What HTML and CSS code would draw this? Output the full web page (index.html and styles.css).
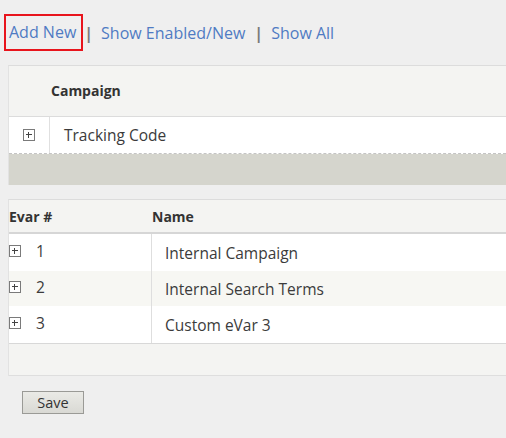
FILE: index.html
```html
<!DOCTYPE html>
<html>
<head>
<meta charset="utf-8">
<link rel="stylesheet" href="styles.css">
</head>
<body>
<div class="toolbar">
  <a class="link addnew" href="#">Add New</a>
  <span class="sep first">|</span>
  <a class="link" href="#">Show Enabled/New</a>
  <span class="sep">|</span>
  <a class="link" href="#">Show All</a>
</div>

<div class="panel panel-one">
  <div class="p1-head">Campaign</div>
  <div class="p1-row">
    <div class="p1-icon"><span class="plus"></span></div>
    <div class="p1-name">Tracking Code</div>
  </div>
  <div class="band"></div>
</div>

<div class="panel panel-two">
  <div class="p2-head">
    <div class="col-num">Evar #</div>
    <div class="col-name">Name</div>
  </div>
  <div class="p2-row">
    <div class="col-num"><span class="plus"></span><span class="num">1</span></div>
    <div class="col-name">Internal Campaign</div>
  </div>
  <div class="p2-row alt">
    <div class="col-num"><span class="plus"></span><span class="num">2</span></div>
    <div class="col-name">Internal Search Terms</div>
  </div>
  <div class="p2-row last">
    <div class="col-num"><span class="plus"></span><span class="num">3</span></div>
    <div class="col-name">Custom eVar 3</div>
  </div>
  <div class="p2-foot"></div>
</div>

<div class="actions">
  <button class="save" type="button">Save</button>
</div>
</body>
</html>
```

FILE: styles.css
```css
html, body {
  margin: 0;
  padding: 0;
  background: #efefef;
  font-family: "Open Sans", "Liberation Sans", sans-serif;
  color: #3b3b3b;
  overflow: hidden;
}

.toolbar {
  display: flex;
  align-items: center;
  padding: 14px 0 0 4px;
  height: 37px;
}

.link {
  color: #4f7bc3;
  text-decoration: none;
  font-size: 16px;
}

.addnew {
  border: 2px solid #e8141c;
  height: 33px;
  line-height: 33px;
  padding: 0 5px 0 3px;
}

.sep {
  color: #7a7a7a;
  font-size: 16px;
  font-weight: 700;
  margin: 0 8px 0 9px;
}

.sep.first {
  margin-left: 1px;
}

.panel {
  margin-left: 8px;
  border-left: 1px solid #e2e2e2;
}

.panel-one {
  margin-top: 14px;
  border-top: 1px solid #dcdcdc;
}

.p1-head {
  height: 50px;
  line-height: 50px;
  background: #f4f4f2;
  border-bottom: 1px solid #dcdcdc;
  padding-left: 42px;
  font-size: 14px;
  font-weight: 700;
  color: #333;
}

.p1-row {
  display: flex;
  height: 36px;
  background: #fff;
  border-bottom: 1px dashed #c4c4c4;
}

.p1-icon {
  width: 41px;
  border-right: 1px solid #e0e0e0;
  display: flex;
  align-items: center;
  padding-left: 14px;
  box-sizing: border-box;
}

.p1-name {
  display: flex;
  align-items: center;
  padding-left: 14px;
  font-size: 15.5px;
}

.band {
  height: 31px;
  background: #d5d5cd;
}

.plus {
  display: inline-block;
  position: relative;
  width: 12px;
  height: 12px;
  border: 1px solid #7a7a7a;
  box-sizing: border-box;
  background: #fff;
  flex: none;
}

.plus::before,
.plus::after {
  content: "";
  position: absolute;
  background: #444;
}

.plus::before {
  left: 2px;
  top: 4px;
  width: 6px;
  height: 1px;
}

.plus::after {
  left: 4px;
  top: 2px;
  width: 1px;
  height: 6px;
}

.panel-two {
  margin-top: 14px;
  border-top: 1px solid #dcdcdc;
}

.p2-head {
  display: flex;
  height: 32px;
  background: #f4f4f2;
  border-bottom: 2px solid #d6d6d6;
  font-size: 14px;
  font-weight: 700;
  color: #333;
}

.p2-head .col-num,
.p2-head .col-name {
  display: flex;
  align-items: center;
}

.col-num {
  width: 143px;
  flex: none;
}

.p2-row {
  display: flex;
  background: #fff;
  font-size: 15.5px;
  height: 37px;
}

.p2-row.alt {
  background: #f7f7f3;
  height: 35px;
}

.p2-row.last {
  height: 37px;
  border-bottom: 1px solid #d8d8d8;
}

.p2-row .col-num {
  display: flex;
  align-items: center;
  border-right: 1px solid #dedede;
  padding-bottom: 4px;
  box-sizing: border-box;
}

.num {
  margin-left: 15px;
}

.p2-row .col-name {
  display: flex;
  align-items: center;
  padding-left: 13px;
}

.p2-foot {
  height: 31px;
  background: #f4f4f2;
  border-bottom: 1px solid #dedede;
}

.actions {
  padding: 15px 0 0 22px;
}

.save {
  width: 62px;
  height: 23px;
  padding: 0;
  border: 1px solid #9a9a96;
  background: linear-gradient(#eaeae6, #d9d9d4);
  font-family: "Open Sans", "Liberation Sans", sans-serif;
  font-size: 14.5px;
  color: #333;
}
```
